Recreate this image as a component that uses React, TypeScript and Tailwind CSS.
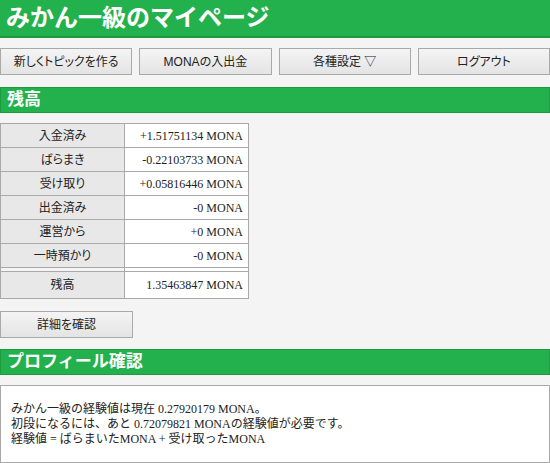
import React from 'react';

// 残高テーブルの行
const ROWS = [
  { label: '入金済み', value: '+1.51751134 MONA' },
  { label: 'ばらまき', value: '-0.22103733 MONA' },
  { label: '受け取り', value: '+0.05816446 MONA' },
  { label: '出金済み', value: '-0 MONA' },
  { label: '運営から', value: '+0 MONA' },
  { label: '一時預かり', value: '-0 MONA' },
];

const SANS = "font-['Liberation_Sans','Noto_Sans_CJK_JP',sans-serif]";
const SERIF = "font-['Liberation_Serif','Noto_Sans_CJK_JP',serif]";

function Btn({ children, className = '' }: { children: React.ReactNode; className?: string }) {
  return (
    <button
      className={`h-[27px] border border-[#a9a9a9] bg-gradient-to-b from-[#f4f4f4] to-[#e4e4e4] text-[12px] text-[#222] [font-feature-settings:'palt'] ${SANS} ${className}`}
    >
      {children}
    </button>
  );
}

function SectionTitle({ children }: { children: React.ReactNode }) {
  return (
    <div className={`h-[26px] border border-[#1e9a40] bg-[#23b14d] pl-[6px] text-[17px] font-bold leading-[24px] text-white ${SANS}`}>
      {children}
    </div>
  );
}

export default function App() {
  return (
    <div className="min-h-screen w-[550px] bg-[#f4f4f4]">
      {/* ヘッダー */}
      <header className={`h-[38px] border-b-2 border-[#1e9a40] bg-[#23b14d] pl-[6px] text-[24px] font-bold leading-[36px] text-white ${SANS}`}>
        みかん一級のマイページ
      </header>

      {/* メニュー */}
      <div className="mt-[10px] grid grid-cols-4 gap-[7px]">
        <Btn>新しくトピックを作る</Btn>
        <Btn>MONAの入出金</Btn>
        <Btn>各種設定 ▽</Btn>
        <Btn>ログアウト</Btn>
      </div>

      <div className="mt-[12px]">
        <SectionTitle>残高</SectionTitle>
      </div>

      {/* 残高テーブル */}
      <table className="mt-[10px] w-[249px] border-collapse text-[12px] text-[#222]">
        <tbody>
          {ROWS.map((r) => (
            <tr key={r.label} className="h-[24px]">
              <td className={`w-[124px] border border-[#a9a9a9] bg-[#e8e8e8] text-center [font-feature-settings:'palt'] ${SANS}`}>{r.label}</td>
              <td className={`border border-[#a9a9a9] bg-white pr-[5px] text-right ${SERIF}`}>{r.value}</td>
            </tr>
          ))}
          <tr className="h-[4px]">
            <td className="border border-[#a9a9a9] bg-[#f4f4f4]"></td>
            <td className="border border-[#a9a9a9] bg-white"></td>
          </tr>
          <tr className="h-[27px]">
            <td className={`border border-[#a9a9a9] bg-[#e8e8e8] text-center ${SANS}`}>残高</td>
            <td className={`border border-[#a9a9a9] bg-white pr-[5px] text-right ${SERIF}`}>1.35463847 MONA</td>
          </tr>
        </tbody>
      </table>

      <Btn className="mt-[12px] w-[133px]">詳細を確認</Btn>

      <div className="mt-[11px]">
        <SectionTitle>プロフィール確認</SectionTitle>
      </div>

      {/* プロフィール */}
      <div className={`mt-[10px] h-[78px] border border-[#a9a9a9] bg-white px-[10px] pt-[16px] text-[12px] leading-[15px] text-[#222] ${SERIF}`}>
        <p>みかん一級の経験値は現在 0.27920179 MONA。</p>
        <p>初段になるには、あと 0.72079821 MONAの経験値が必要です。</p>
        <p>経験値 = ばらまいたMONA + 受け取ったMONA</p>
      </div>
    </div>
  );
}
